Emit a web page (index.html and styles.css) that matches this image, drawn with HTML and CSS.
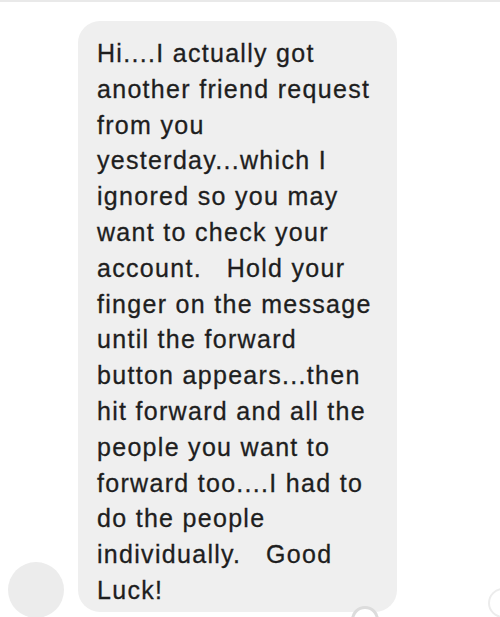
FILE: index.html
```html
<!DOCTYPE html>
<html lang="en">

<head>
    <meta charset="UTF-8">
    <meta name="viewport" content="width=device-width, initial-scale=1">
    <title>Message</title>
    <link rel="stylesheet" href="styles.css">
</head>

<body>
    <div class="top-line"></div>
    <div class="thread">
        <div class="message-row">
            <div class="avatar"></div>
            <div class="bubble">
                <p class="message-text">Hi....I actually got<br>another friend request<br>from you<br>yesterday...which I<br>ignored so you may<br>want to check your<br>account.&nbsp;&nbsp; Hold your<br>finger on the message<br>until the forward<br>button appears...then<br>hit forward and all the<br>people you want to<br>forward too....I had to<br>do the people<br>individually.&nbsp;&nbsp; Good<br>Luck!</p>
                <span class="reaction-peek"></span>
            </div>
        </div>
        <span class="react-button"></span>
    </div>
</body>

</html>
```

FILE: styles.css
```css
body {
    margin: 0;
    background-color: #ffffff;
    font-family: "Liberation Sans", Arial, sans-serif;
    height: 617px;
    overflow: hidden;
}

.top-line {
    height: 2px;
    background-color: #e9e9e9;
}

.thread {
    position: relative;
    padding-top: 19px;
}

.message-row {
    display: flex;
    align-items: flex-end;
    gap: 14px;
    padding-left: 8px;
}

.avatar {
    width: 56px;
    height: 56px;
    border-radius: 50%;
    background-color: #ececec;
    flex-shrink: 0;
    margin-bottom: -6px;
}

.bubble {
    position: relative;
    width: 319px;
    box-sizing: border-box;
    padding: 15px 8px 3px 19px;
    border-radius: 22px;
    background-color: #efefef;
}

.message-text {
    margin: 0;
    font-size: 25px;
    line-height: 35.8px;
    letter-spacing: 1.3px;
    color: #1e1e1e;
    white-space: nowrap;
    -webkit-text-stroke: 0.3px #1e1e1e;
}

.reaction-peek {
    position: absolute;
    left: 273px;
    bottom: -22px;
    width: 22px;
    height: 22px;
    border: 3px solid #dcdcdc;
    border-radius: 50%;
    background-color: #ffffff;
}

.react-button {
    position: absolute;
    right: -18px;
    bottom: -6px;
    width: 26px;
    height: 26px;
    border: 2px solid #ececec;
    border-radius: 50%;
}
```
